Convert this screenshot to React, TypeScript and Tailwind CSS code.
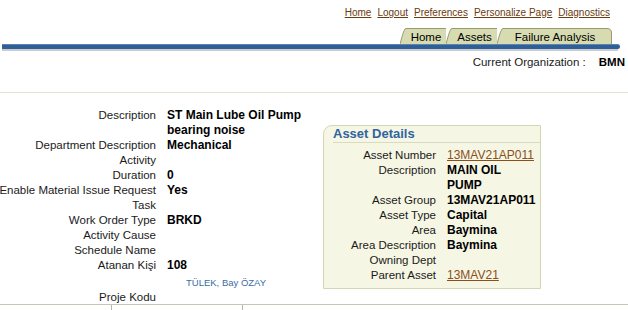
import React from "react";

const font = { fontFamily: '"Liberation Sans", Arial, sans-serif' };

function Slant() {
  return (
    <svg width="6" height="16" viewBox="0 0 6 16" className="block shrink-0">
      <path d="M0,16 C1.5,11 3,4 5,1 L6,0.5 L6,16 Z" fill="#d7dbb2" />
      <path d="M0,16 C1.5,11 3,4 5,1 L6,0.5" fill="none" stroke="#9a9a6c" strokeWidth="1" />
    </svg>
  );
}

function Cap() {
  return (
    <svg width="5" height="16" viewBox="0 0 5 16" className="block shrink-0">
      <path d="M0,0.5 C3,0.5 4.5,2 4.5,5 L4.5,16 L0,16 Z" fill="#d7dbb2" />
      <path d="M0,0.5 C3,0.5 4.5,2 4.5,5 L4.5,16" fill="none" stroke="#9a9a6c" strokeWidth="1" />
    </svg>
  );
}

function Tab({ label, w }: { label: string; w: string }) {
  return (
    <>
      <Slant />
      <div
        className={`${w} h-[16px] border-t border-[#9a9a6c] bg-[#d7dbb2] flex items-center justify-center text-[11.5px] leading-[14px] text-black`}
      >
        {label}
      </div>
    </>
  );
}

function Row({ label, children }: { label: string; children?: React.ReactNode }) {
  return (
    <>
      <div className="flex justify-end whitespace-nowrap text-[11.5px] leading-[15px] text-[#1a1a1a]">{label}</div>
      <div className="text-[12px] leading-[15px] font-bold text-black">{children}</div>
    </>
  );
}

export default function App() {
  return (
    <div className="w-[628px] h-[310px] overflow-hidden bg-white" style={font}>
      {/* global links */}
      <div className="h-[28px] pt-[7px] flex justify-end pr-[18px] gap-[6px] text-[10px] leading-[12px]">
        {["Home", "Logout", "Preferences", "Personalize Page", "Diagnostics"].map((l) => (
          <a key={l} className="underline text-[#6b3a0e]">
            {l}
          </a>
        ))}
      </div>
      {/* tabs */}
      <div className="h-[16px] flex justify-end pr-[16px]">
        <Tab label="Home" w="w-[40px]" />
        <Tab label="Assets" w="w-[45px]" />
        <Tab label="Failure Analysis" w="w-[104px]" />
        <Cap />
      </div>
      {/* blue bar */}
      <div className="ml-[2px] mr-[8px] h-[5px] rounded-r-[3px] bg-[#2f5f95] border-t border-[#5b84b4]" />
      <div className="ml-[2px] mr-[10px] h-[2px] bg-[#c9cdd2]" />
      {/* organization */}
      <div className="mt-[4px] h-[15px] flex justify-end items-center pr-[3px] gap-[13px] text-[11.5px] leading-[15px]">
        <span className="text-[#1a1a1a]">Current Organization :</span>
        <span className="font-bold text-black">BMN</span>
      </div>
      <div className="h-[22px]" />
      {/* content */}
      <div className="border-t border-[#e2e5cc] h-[212px] flex">
        <div className="pt-[15px] flex flex-col">
          <div className="grid grid-cols-[156px_145px] gap-x-[11px]">
            <Row label="Description">ST Main Lube Oil Pump bearing noise</Row>
            <Row label="Department Description">Mechanical</Row>
            <Row label="Activity" />
            <Row label="Duration">0</Row>
            <Row label="Enable Material Issue Request">Yes</Row>
            <Row label="Task" />
            <Row label="Work Order Type">BRKD</Row>
            <Row label="Activity Cause" />
            <Row label="Schedule Name" />
            <Row label="Atanan Kişi">108</Row>
          </div>
          <div className="h-[17px] pt-[4px] pl-[186px] text-[9.5px] leading-[12px] text-[#3a6ea5]">TÜLEK, Bay ÖZAY</div>
          <div className="grid grid-cols-[156px_145px] gap-x-[11px]">
            <div className="flex justify-end whitespace-nowrap text-[11.5px] leading-[14px] text-[#1a1a1a]">Proje Kodu</div>
            <div />
          </div>
        </div>
        <div className="ml-[11px] mt-[32px] self-start w-[218px] border border-[#d3d7b6] rounded-tl-[9px] bg-[#f6f6e5] pb-[5px]">
          <div className="ml-[9px] h-[17px] border-b border-[#d8dbc0] text-[13px] leading-[16px] font-bold text-[#2f64a0]">
            Asset Details
          </div>
          <div className="mt-[5px] grid grid-cols-[112px_90px] gap-x-[11px]">
            <Row label="Asset Number">
              <a className="underline font-normal text-[#8a4f1c]">13MAV21AP011</a>
            </Row>
            <Row label="Description">MAIN OIL PUMP</Row>
            <Row label="Asset Group">13MAV21AP011</Row>
            <Row label="Asset Type">Capital</Row>
            <Row label="Area">Baymina</Row>
            <Row label="Area Description">Baymina</Row>
            <Row label="Owning Dept" />
            <Row label="Parent Asset">
              <a className="underline font-normal text-[#8a4f1c]">13MAV21</a>
            </Row>
          </div>
        </div>
      </div>
      {/* bottom line */}
      <div className="h-[6px] border-t border-[#c5c7b0] flex">
        <div className="w-[112px] border-r border-[#b5b5b5]" />
        <div className="w-[131px] border-r border-[#b5b5b5]" />
      </div>
    </div>
  );
}
